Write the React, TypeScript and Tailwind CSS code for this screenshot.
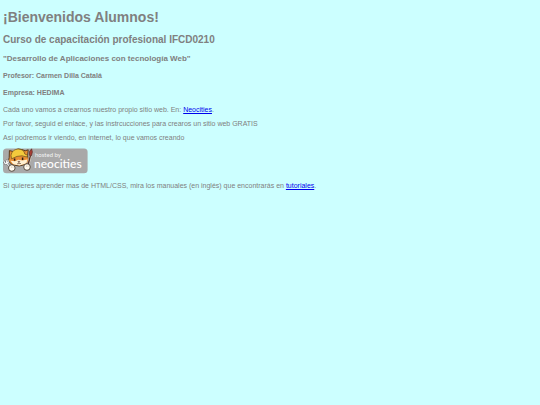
import React from 'react';

const NeocitiesBadge: React.FC = () => (
    <svg viewBox="0 0 85 26" className="block w-[85px] h-[26px]" role="img" aria-label="Hosted by Neocities">
        <rect x="0" y="0.5" width="84.6" height="24.8" rx="3.5" fill="#a9a9a9" />
        {/* cat */}
        <path d="M6.2 9.5L6.4 2.6 10.4 3.6 15 1l4 .6 3.2 1.2 3-1-.6 6.2 1.4 4.4-2.4 3.8-7.4 1.8-7-1.2L5.4 13z" fill="#e98f35" stroke="#4a3018" strokeWidth=".9" />
        <path d="M7.6 12.8l4.4 .5 3.4-1.6 4 .8 5-1-1 3.8-6.8 2.2-6.4-1.3z" fill="#fff0d2" />
        <path d="M8 7.6C8.6 3.4 11.6 1 15.6 1.1c3.6.1 5.8 1.9 6.2 4.9l2.8 1.2-.8 1.8-4.8-1.2-5 .6-5.4 2.4z" fill="#f3cb3c" stroke="#6b4f1c" strokeWidth=".7" />
        <path d="M11.6 10.4v2.4M19.6 9.6v2.4" stroke="#2e2018" strokeWidth="1.5" />
        <path d="M15 13.4h1.8l-.9 1.1zm.9 1.1v.8m-1.8.3q1 .9 1.8-.3 1.1 1 2 0" fill="none" stroke="#65402d" strokeWidth=".7" />
        {/* fork */}
        <path d="M.6 12.6l1.8 3.6M2.8 11.6l1.4 3.4M4.8 11.8l.6 3M2 15.6l3.6-1M3.8 15.4l4 4.2" stroke="#5c5c5c" strokeWidth="2" fill="none" />
        <path d="M.6 12.6l1.8 3.6M2.8 11.6l1.4 3.4M4.8 11.8l.6 3M2 15.6l3.6-1M3.8 15.4l4 4.2" stroke="#f6f6f6" strokeWidth="1.1" fill="none" />
        <circle cx="8.8" cy="20" r="3.3" fill="#fffaf0" stroke="#4c4034" strokeWidth=".9" />
        <path d="M8.4 18.4v1.5M10 18.6v1.2" stroke="#c8b89c" strokeWidth=".6" />
        {/* brush */}
        <path d="M27.4 7.6L24.8 18" stroke="#f2ead8" strokeWidth="2.4" />
        <path d="M27.4 7.6L24.8 18" stroke="#5a3226" strokeWidth="1.5" />
        <path d="M26.4 7.4l.2-3.8L28.6.8l.8 3.2-1 3.8z" fill="#a83d34" stroke="#54241f" strokeWidth=".6" />
        <circle cx="24" cy="19" r="3.3" fill="#fffaf0" stroke="#4c4034" strokeWidth=".9" />
        <path d="M23.4 17.4v1.5M25 17.5v1.3" stroke="#c8b89c" strokeWidth=".6" />
        <text x="32" y="9" fontSize="6" fill="#f4f4f4" fontFamily="Lato, sans-serif">hosted by</text>
        <text x="31" y="20" fontSize="12" fontWeight="500" fill="#fff" fontFamily="Lato, sans-serif">neocities</text>
    </svg>
);

const App: React.FC = () => {
    return (
        <main className="min-h-screen bg-[#ccffff] px-[3px] py-[9px] font-['Liberation_Sans',Arial,sans-serif] text-[7px] leading-[8px] text-[#808080]">
            <h1 className="text-[14px] leading-4 font-bold">¡Bienvenidos Alumnos!</h1>
            <h2 className="mt-[9px] text-[10px] leading-3 font-bold">Curso de capacitación profesional IFCD0210</h2>
            <h3 className="mt-2 text-[8px] leading-[10px] font-bold">"Desarrollo de Aplicaciones con tecnología Web"</h3>
            <h4 className="mt-2 font-bold">Profesor: Carmen Dilla Catalá</h4>
            <h4 className="mt-[9px] font-bold">Empresa: HEDIMA</h4>
            <div className="mt-[9px] space-y-[6px]">
                <p>
                    Cada uno vamos a crearnos nuestro propio sitio web. En:{' '}
                    <a href="https://neocities.org" className="text-[#0000ee] underline">Neocities</a>.
                </p>
                <p>Por favor, seguid el enlace, y las instrcucciones para crearos un sitio web GRATIS</p>
                <p>Así podremos ir viendo, en internet, lo que vamos creando</p>
            </div>
            <a href="https://neocities.org" className="mt-[6px] block w-fit">
                <NeocitiesBadge />
            </a>
            <p className="mt-2">
                Si quieres aprender mas de HTML/CSS, mira los manuales (en inglés) que encontrarás en{' '}
                <a href="https://neocities.org/tutorials" className="text-[#0000ee] underline">tutoriales</a>.
            </p>
        </main>
    );
};

export default App;
